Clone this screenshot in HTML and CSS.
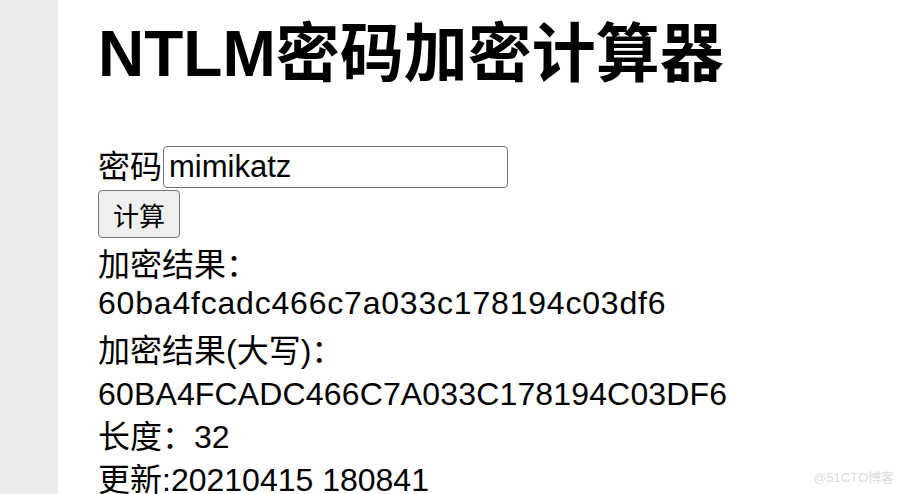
FILE: index.html
```html
<!DOCTYPE html>
<html lang="zh-CN">
<head>
<meta charset="utf-8">
<title>NTLM密码加密计算器</title>
<link rel="stylesheet" href="styles.css">
</head>
<body>
<div class="page">
  <div class="sidebar"></div>
  <div class="main">
    <h1 class="title">NTLM密码加密计算器</h1>
    <div class="row">
      <label class="label" for="pwd">密码</label>
      <input class="input" id="pwd" type="text" value="mimikatz">
    </div>
    <button class="btn" type="button">计算</button>
    <div class="results">
      <div class="line">加密结果：</div>
      <div class="line lower">60ba4fcadc466c7a033c178194c03df6</div>
      <div class="line">加密结果(大写)：</div>
      <div class="line upper">60BA4FCADC466C7A033C178194C03DF6</div>
      <div class="line">长度：32</div>
      <div class="line">更新:20210415 180841</div>
    </div>
  </div>
</div>
<div class="watermark">@51CTO博客</div>
</body>
</html>
```
FILE: styles.css
```css
html, body {
  margin: 0;
  padding: 0;
  background: #ffffff;
}
body {
  font-family: "Liberation Sans", "Noto Sans CJK SC", sans-serif;
  color: #000;
  overflow: hidden;
}
.page {
  display: flex;
  min-height: 494px;
}
.sidebar {
  width: 58px;
  flex: none;
  background: #ebebeb;
}
.main {
  flex: 1;
  padding-left: 40px;
}
.title {
  font-size: 64px;
  font-weight: bold;
  line-height: 74px;
  margin: 17px 0 0 0;
}
.row {
  display: flex;
  align-items: center;
  margin-top: 55px;
  height: 42px;
}
.label {
  font-size: 32px;
  line-height: 42px;
}
.input {
  box-sizing: border-box;
  width: 345px;
  height: 42px;
  margin: 0 0 0 1px;
  padding: 0 5px;
  font-family: "Liberation Sans", "Noto Sans CJK SC", sans-serif;
  font-size: 31px;
  color: #000;
  border: 1px solid #737373;
  border-radius: 4px;
  background: #fff;
}
.btn {
  display: block;
  box-sizing: border-box;
  height: 48px;
  margin-top: 2px;
  padding: 0 14px;
  font-family: "Liberation Sans", "Noto Sans CJK SC", sans-serif;
  font-size: 26px;
  color: #000;
  background: #efefef;
  border: 1px solid #767676;
  border-radius: 4px;
}
.results {
  margin-top: 6px;
  font-size: 32px;
  line-height: 43px;
}
.lower {
  letter-spacing: 0.8px;
  margin-top: -5px;
  margin-bottom: 5px;
}
.upper {
  letter-spacing: 0.15px;
}
.watermark {
  position: absolute;
  right: 10px;
  bottom: 8px;
  font-family: "Liberation Sans", "Noto Sans CJK SC", sans-serif;
  font-size: 13px;
  color: #dcdcdc;
}
```
